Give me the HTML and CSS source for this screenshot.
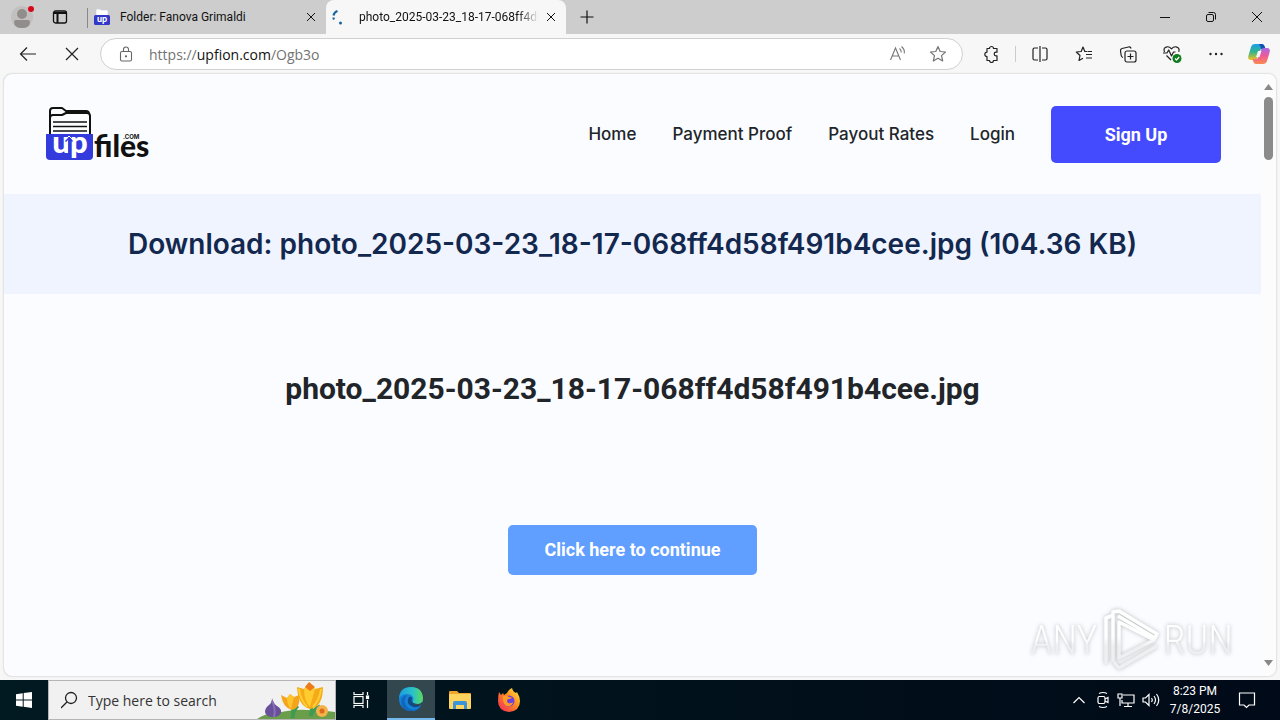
FILE: index.html
```html
<!doctype html>
<html lang="en">
<head>
	<meta charset="utf-8">
	<title>UpFiles - Download</title>
	<link rel="stylesheet" href="styles.css">
</head>

<body>
	<!-- tabs -->
	<header class="tabs">
		<button class="profile" aria-label="Profile">
			<svg width="28" height="28" viewBox="0 0 28 28">
				<circle cx="14" cy="14" r="11" fill="#c2c0bf"/>
				<circle cx="14" cy="11" r="5" fill="#908d8b"/>
				<path d="M6 19q0-2 2-2h12q2 0 2 2 0 6-8 6t-8-6z" fill="#908d8b"/>
				<circle cx="23" cy="6" r="3" fill="#d8081c"/>
			</svg>
		</button>
		<button class="workspace" aria-label="Tab actions">
			<svg width="16" height="16" viewBox="0 0 16 16" fill="none" stroke="#111" stroke-width="1.3">
				<rect x="1.5" y="2" width="13" height="12" rx="2"/>
				<path d="M1.5 4h13M5.5 4v10" stroke-width="2"/>
			</svg>
		</button>
		<div class="tab tab-idle">
			<svg width="16" height="16" viewBox="0 0 16 16">
				<path d="M2 8V1q0-1 1-1h3l1 1h6q1 0 1 1v6z" fill="#fff" stroke="#c8c8d8" stroke-width=".6"/>
				<rect y="6" width="16" height="10" rx="1.5" fill="#3238c8"/>
				<text x="8" y="13" text-anchor="middle" class="fav-text">up</text>
			</svg>
			<span class="tab-name">Folder: Fanova Grimaldi</span>
			<button class="tab-close" aria-label="Close tab">
				<svg width="10" height="10" viewBox="0 0 10 10" stroke="#111"><path d="M1 1l8 8M9 1L1 9"/></svg>
			</button>
		</div>
		<div class="tab tab-active">
			<svg width="16" height="16" viewBox="0 0 16 16" fill="none" stroke="#17659e" stroke-width="2.2">
				<path d="M3 10.500a6 6 0 0 1-.5-2"/>
				<path d="M2.500 6.500a6 6 0 0 1 4-4.500"/>
				<circle cx="9.500" cy="14" r=".7" stroke-width="1.600"/>
			</svg>
			<span class="tab-name">photo_2025-03-23_18-17-068ff4d58f491b4cee.jpg</span>
			<button class="tab-close" aria-label="Close tab">
				<svg width="10" height="10" viewBox="0 0 10 10" stroke="#111"><path d="M1 1l8 8M9 1L1 9"/></svg>
			</button>
		</div>
		<button class="new-tab" aria-label="New tab">
			<svg width="14" height="14" viewBox="0 0 14 14" stroke="#111"><path d="M7 .5v13M.5 7h13" stroke-width="1.200"/></svg>
		</button>
		<div class="window-btns">
			<button aria-label="Minimize">
				<svg width="12" height="12" viewBox="0 0 12 12" stroke="#111"><path d="M1 6.500h10"/></svg>
			</button>
			<button aria-label="Restore">
				<svg width="12" height="12" viewBox="0 0 12 12" fill="none" stroke="#111">
					<rect x="1.500" y="3.500" width="7" height="7" rx="1.500"/>
					<path d="M3.500 1.500h5q2 0 2 2v5"/>
				</svg>
			</button>
			<button aria-label="Close window">
				<svg width="12" height="12" viewBox="0 0 12 12" stroke="#111"><path d="M1 1l10 10M11 1L1 11"/></svg>
			</button>
		</div>
	</header>

	<!-- toolbar -->
	<div class="toolbar">
		<button class="tool" aria-label="Back">
			<svg width="20" height="20" viewBox="0 0 20 20" fill="none" stroke="#222" stroke-width="1.200"><path d="M18 10H2.500M9 3.500L2.500 10 9 16.500"/></svg>
		</button>
		<button class="tool" aria-label="Stop">
			<svg width="20" height="20" viewBox="0 0 20 20" stroke="#222" stroke-width="1.200"><path d="M4 4l12 12M16 4L4 16"/></svg>
		</button>
		<div class="address">
			<svg width="16" height="16" viewBox="0 0 16 16" fill="none" stroke="#666" stroke-width="1.100">
				<rect x="2.500" y="5.500" width="11" height="9.500" rx="1.500"/>
				<path d="M5.500 5.500V3.500a2.500 2.500 0 0 1 5 0v2"/>
				<circle cx="8" cy="10.300" r=".6" fill="#444"/>
			</svg>
			<a class="url" href="#">https://<b>upfion.com</b>/Ogb3o</a>
			<button class="addr-btn" aria-label="Read aloud">
				<svg width="18" height="18" viewBox="0 0 18 18" fill="none" stroke="#777" stroke-width="1.100">
					<path d="M1.500 15L6.500 3l5 12M3.200 11h6.600"/>
					<path d="M10.500 3.500q2 1.500 1.700 4M12.500 1.500q3.600 3 2.700 7"/>
				</svg>
			</button>
			<button class="addr-btn" aria-label="Add to favorites">
				<svg width="18" height="18" viewBox="0 0 18 18" fill="none" stroke="#777" stroke-width="1.200" stroke-linejoin="round">
					<path d="M9 1.500l2.200 5 5.300.5-4 3.600 1.200 5.400L9 13.200 4.300 16l1.200-5.400-4-3.600 5.300-.5z"/>
				</svg>
			</button>
		</div>
		<div class="tools">
			<button class="tool" aria-label="Extensions">
				<svg width="18" height="18" viewBox="0 0 18 18" fill="none" stroke="#222" stroke-width="1.200" stroke-linejoin="round">
					<path d="M5 3.500h2.500a2 2 0 1 1 4 0H15v3.700h-1a1.800 1.800 0 1 0 0 3.600h1v4.700h-3.500a2 2 0 1 1-4 0H5v-4a2.200 2.200 0 1 1 0-4.400z"/>
				</svg>
			</button>
			<span class="sep"></span>
			<button class="tool" aria-label="Split screen">
				<svg width="18" height="18" viewBox="0 0 18 18" fill="none" stroke="#222" stroke-width="1.200">
					<path d="M7 3H3.500Q2 3 2 4.500v9Q2 15 3.500 15H7M11 3h3.500Q16 3 16 4.500v9q0 1.500-1.500 1.500H11M9 1v16"/>
				</svg>
			</button>
			<button class="tool" aria-label="Favorites">
				<svg width="18" height="18" viewBox="0 0 18 18" fill="none" stroke="#222" stroke-width="1.200" stroke-linejoin="round">
					<path d="M12.500 6.500H9.800L8 2 6.200 6.500 1.300 7 5 10.500 4 15.500l4-2.300M11 9.500h6M11 13h6M13 6.500h4"/>
				</svg>
			</button>
			<button class="tool" aria-label="Collections">
				<svg width="18" height="18" viewBox="0 0 18 18" fill="none" stroke="#222" stroke-width="1.200">
					<rect x="6" y="6" width="11" height="11" rx="2"/>
					<path d="M11.500 8.500v6M8.500 11.500h6M4 12.500Q2.500 12 2.200 10.500L1.500 6Q1.200 4 3 3.500L9.500 2q2-.5 2.500 1.500"/>
				</svg>
			</button>
			<button class="tool" aria-label="Browser essentials">
				<svg width="20" height="20" viewBox="0 0 20 20" fill="none" stroke="#222" stroke-width="1.200" stroke-linejoin="round">
					<path d="M2.500 8Q.8 3.500 5 2.800q2.500-.3 4.500 2 2-2.300 4.500-2 4 .7 2.800 5M4.500 11.500l4.500 4.500M1 9h4l1.700-3 2.800 6 2-4h2"/>
					<circle cx="15" cy="14.500" r="4.500" fill="#107c20" stroke="none"/>
					<path d="M13 14.500l1.500 1.500 2.700-3" stroke="#fff"/>
				</svg>
			</button>
			<button class="tool" aria-label="Settings and more">
				<svg width="18" height="18" viewBox="0 0 18 18" fill="#222"><circle cx="3.500" cy="9" r="1.200"/><circle cx="9" cy="9" r="1.200"/><circle cx="14.500" cy="9" r="1.200"/></svg>
			</button>
			<button class="tool" aria-label="Copilot">
				<svg width="24" height="24" viewBox="0 0 24 24">
					<defs>
						<linearGradient id="cpA" x1="0" y1="0" x2="0" y2="1">
							<stop offset="0" stop-color="#1a9fe8"/><stop offset=".5" stop-color="#35b48c"/><stop offset="1" stop-color="#f5c21d"/>
						</linearGradient>
						<linearGradient id="cpB" x1="0" y1="0" x2="0" y2="1">
							<stop offset="0" stop-color="#a868e8"/><stop offset=".5" stop-color="#ef5a96"/><stop offset="1" stop-color="#fb8a4e"/>
						</linearGradient>
					</defs>
					<path d="M8 2h7q2 0 2.700 2.500l.8 2.500h-3q-2.500 0-3.200 2.500l-2 6Q9.500 18 7 18H4q-3.500 0-2.700-4L4 5q1-3 4-3z" fill="url(#cpA)"/>
					<path d="M12 2h3q2 0 2.700 2.500l.8 2.500h-4z" fill="#164fb5"/>
					<path d="M16 22H9q-2 0-2.700-2.500L5.500 17h3q2.500 0 3.200-2.500l2-6Q14.500 6 17 6h3q3.500 0 2.700 4L20 19q-1 3-4 3z" fill="url(#cpB)"/>
					<path d="M11 9h3.500L12.500 15H9z" fill="#f7f7f7"/>
				</svg>
			</button>
		</div>
	</div>

	<!-- site -->
	<div class="view">
		<main class="site">
			<div class="site-head">
				<a class="logo" href="#" aria-label="UpFiles.com">
					<svg width="110" height="58" viewBox="0 0 110 58">
						<g fill="none" stroke="#111" stroke-width="2" stroke-linejoin="round">
							<path d="M6 29V6q0-3 3-3h9l4 3h20q3 0 3 3"/>
							<path d="M6 13q0-3 3-3h9l4-2h21q3 0 3 3v18"/>
							<path d="M9 17h34M9 21.500h34M9 26h34" stroke-width="1.700"/>
						</g>
						<path d="M2 29h47v22q0 4-4 4H6q-4 0-4-4z" fill="#343bdc"/>
						<text x="26" y="48" text-anchor="middle" class="logo-up">up</text>
						<path d="M25 51V34M21.500 36.500L25 33l3.500 3.500" fill="none" stroke="#343bdc" stroke-width="1.500"/>
						<path d="M21.500 34.500L25 31l3.500 3.500" fill="none" stroke="#fff"/>
						<text x="50" y="52" class="logo-files">files</text>
						<text x="79" y="34" class="logo-com">.COM</text>
					</svg>
				</a>
				<nav class="menu">
					<a href="#">Home</a>
					<a href="#">Payment Proof</a>
					<a href="#">Payout Rates</a>
					<a href="#">Login</a>
					<a class="signup" href="#">Sign Up</a>
				</nav>
			</div>
			<div class="banner">
				<h1>Download: photo_2025-03-23_18-17-068ff4d58f491b4cee.jpg (104.36 KB)</h1>
			</div>
			<div class="content">
				<h2>photo_2025-03-23_18-17-068ff4d58f491b4cee.jpg</h2>
				<button class="continue">Click here to continue</button>
			</div>
		</main>
		<div class="scrollbar">
			<svg width="9" height="6" viewBox="0 0 9 6" fill="#888"><path d="M0 6l4.500-6L9 6z"/></svg>
			<div class="thumb"></div>
			<svg width="9" height="6" viewBox="0 0 9 6" fill="#888"><path d="M0 0h9L4.500 6z"/></svg>
		</div>
		<div class="watermark">
			<span>ANY</span>
			<svg width="58" height="64" viewBox="0 0 58 64" fill="none" stroke="url(#wm)" stroke-width="3.500" stroke-linejoin="round">
				<defs>
					<linearGradient id="wm" gradientUnits="userSpaceOnUse" x1="0" y1="0" x2="0" y2="64">
						<stop offset=".45" stop-color="#fff"/><stop offset=".6" stop-color="#ececf0"/>
					</linearGradient>
				</defs>
				<path d="M12 7L4 10v46"/>
				<path d="M11 54V4l6-1 38 23-2 4L16 8"/>
				<path d="M17 14v36l35-18z"/>
				<path d="M12 54l5 6 38-22"/>
			</svg>
			<span>RUN</span>
		</div>
	</div>

	<!-- taskbar -->
	<footer class="taskbar">
		<button class="start" aria-label="Start">
			<svg width="16" height="16" viewBox="0 0 16 16" fill="#fff"><path d="M0 2.300L6.700 1.300V7.500H0zM7.700 1.100L16 0v7.500H7.700zM0 8.500h6.700v6.200L0 13.700zM7.700 8.500H16V16l-8.300-1.200z"/></svg>
		</button>
		<div class="search">
			<svg width="18" height="18" viewBox="0 0 18 18" fill="none" stroke="#222" stroke-width="1.300"><circle cx="10" cy="7" r="5.500"/><path d="M6 11L0 17"/></svg>
			<input type="text" placeholder="Type here to search" aria-label="Type here to search">
			<svg class="flowers" width="78" height="38" viewBox="0 0 78 38">
				<path d="M0 38q8-6 20-6 18-4 30-3 16 0 28 2v7z" fill="#6b9e4b"/>
				<path d="M35 37q2-8-1-15M36 37q0-7 5-12M53 35q3-8 0-17M54 35q2-7 9-10" stroke="#3f9a52" stroke-width="3" fill="none"/>
				<path d="M15 17q1 5 5 8 5 3 4 7-2 4-8 4-7 0-8-5 0-4 4-7 3-2 3-7z" fill="#68509a"/>
				<path d="M15 20q4 7 2 16" stroke="#8a6fb5" stroke-width="2" fill="none"/>
				<path d="M24 14l6 3 3-4 4 3 5-2q2 13-7 15-9-2-11-15z" fill="#f4a51c"/>
				<path d="M30 17l3-4 4 3-3 12q-4-4-4-11z" fill="#ffc52e"/>
				<path d="M40 6l7 2 5-6 6 6 8-2q0 20-13 22-12-3-13-22z" fill="#f5aa18"/>
				<path d="M47 8l5-6 6 6-5 18q-6-6-6-18z" fill="#ffcb2e"/>
				<path d="M48 6l4-5 6 5-5 4z" fill="#ec7b18"/>
				<path d="M42 8q1 10 8 18M64 8q-1 10-8 18" stroke="#ffcf36" stroke-width="2" fill="none"/>
				<circle cx="65" cy="30" r="6" fill="#f5b14a"/><circle cx="65" cy="30" r="2.500" fill="#dc6b20"/>
			</svg>
		</div>
		<button class="task task-view" aria-label="Task view">
			<svg width="18" height="18" viewBox="0 0 18 18" fill="none" stroke="#fff" stroke-width="1.200">
				<rect x="2" y="5.500" width="9" height="7"/>
				<path d="M2 1v2.500h9V1M2 17v-2.500h9V17M15.500 1v3M15.500 9v8"/>
				<rect x="14.500" y="5" width="2" height="2.500" fill="#fff"/>
			</svg>
		</button>
		<button class="task task-on" aria-label="Microsoft Edge">
			<svg width="26" height="26" viewBox="0 0 26 26">
				<defs>
					<linearGradient id="edA" x1="0" y1="0" x2="1" y2="0">
						<stop offset="0" stop-color="#1b9de2"/><stop offset=".6" stop-color="#2bc3c4"/><stop offset="1" stop-color="#5ddb5a"/>
					</linearGradient>
				</defs>
				<circle cx="13" cy="13" r="12" fill="#1581d8"/>
				<path d="M1 12Q2 1 13 1q11 0 12 11 0 6-6 6-5 0-4-3 1-2 0-4-2-3-6-3-5 0-8 4z" fill="url(#edA)"/>
				<path d="M9 9q-5 7 1 13 6 4 12-1-3 5-9 4-9 0-10-9 0-6 6-7z" fill="#1068bd"/>
				<path d="M11 11q-4 7 4 10 5 1 8-2l1-1-4 0q-8 0-6-6-1-2-3-1z" fill="#114b85"/>
				<path d="M14 14q0 4 5 4 4 0 5-2l1 2-2 1q-8 3-9-5z" fill="#33484f"/>
			</svg>
		</button>
		<button class="task" aria-label="File Explorer">
			<svg width="22" height="20" viewBox="0 0 22 20">
				<path d="M0 2q0-1 1-1h7l2 2h11q1 0 1 1v3H0z" fill="#eda52c"/>
				<rect y="4" width="22" height="15" rx="1" fill="#ffd45e"/>
				<path d="M4 19v-6q0-2 2-2h10q2 0 2 2v6h-3v-4H7v4z" fill="#3a95d8"/>
			</svg>
		</button>
		<button class="task" aria-label="Firefox">
			<svg width="24" height="24" viewBox="0 0 24 24">
				<defs>
					<linearGradient id="ffA" x1="1" y1="0" x2="0" y2="1">
						<stop offset="0" stop-color="#fff23e"/><stop offset=".45" stop-color="#ff8a20"/><stop offset="1" stop-color="#f5205f"/>
					</linearGradient>
				</defs>
				<path d="M2 4l2 3 2-2 1 2 3-2q2-4 5-5 1 4 4 5l1-1q3 5 3 9 0 10-11 11Q1 23 1 13q0-5 1-9z" fill="url(#ffA)"/>
				<circle cx="12" cy="13" r="5.500" fill="#7040dc"/>
				<path d="M6 8q4-1 6 1 2 0 3 1-2 1-4 1-2 2 0 4 3 1 5-1-1 5-6 4-5-2-4-10z" fill="#ff9a24"/>
			</svg>
		</button>
		<div class="tray">
			<svg class="chevron" width="12" height="12" viewBox="0 0 12 12" fill="none" stroke="#fff" stroke-width="1.200"><path d="M.5 9L6 3.500 11.500 9"/></svg>
			<svg width="14" height="18" viewBox="0 0 14 18" fill="none" stroke="#fff" stroke-width="1.200"><rect x="2" y="5.500" width="7" height="7" rx="1.500"/><path d="M9 8l3-1.500v5L9 10M3 2.500q4-2 8 0M3 15.500q4 2 8 0"/></svg>
			<svg width="18" height="16" viewBox="0 0 18 16" fill="none" stroke="#fff" stroke-width="1.200"><path d="M6 3h11v8H5V8M11 11v3M7 14.500h8"/><path d="M1 2h4v4H1zM3 6v8"/></svg>
			<svg width="18" height="16" viewBox="0 0 18 16" fill="none" stroke="#fff" stroke-width="1.200"><path d="M1 6h2.500L7 2.500v11L3.500 10H1zM9.500 6q1.500 2 0 4M12 4q3 4 0 8M14.500 2q4.500 6 0 12"/></svg>
		</div>
		<div class="clock">
			<span>8:23 PM</span>
			<span>7/8/2025</span>
		</div>
		<button class="notify" aria-label="Notifications">
			<svg width="18" height="18" viewBox="0 0 18 18" fill="none" stroke="#fff" stroke-width="1.200"><path d="M1.500 2h15v12H11l-2.500 2.500L6 14H1.500z"/></svg>
		</button>
	</footer>
</body>
</html>
```
FILE: styles.css
```css
* {
	box-sizing: border-box;
}
body {
	display: flex;
	flex-direction: column;
	margin: 0;
	height: 100vh;
	overflow: hidden;
	background-color: #f7f7f7;
	font-family: "Open Sans", "Noto Sans", sans-serif;
	font-size: 12px;
	color: #111;
}
button {
	display: flex;
	align-items: center;
	justify-content: center;
	padding: 0;
	border: 0;
	background: none;
	font-family: inherit;
}
a {
	color: inherit;
	text-decoration: none;
}
svg {
	flex: none;
}

/* tabs */
.tabs {
	display: flex;
	height: 34px;
	flex: none;
	background-color: #cdcdcd;
}
.profile {
	width: 28px;
	margin-left: 8px;
}
.workspace {
	width: 48px;
}
.tab {
	display: flex;
	align-items: center;
	padding: 0 7px;
}
.tab-idle {
	position: relative;
	width: 242px;
	gap: 10px;
	padding-left: 10px;
}
.tab-idle::before {
	content: "";
	position: absolute;
	left: 3px;
	top: 8px;
	width: 1px;
	height: 20px;
	background-color: #888;
}
.tab-active {
	width: 240px;
	gap: 4px;
	padding-left: 5px;
	border-radius: 8px 8px 0 0;
	background-color: #f7f7f7;
}
.tab-name {
	flex: 1;
	overflow: hidden;
	white-space: nowrap;
	font-family: Roboto, sans-serif;
}
.tab-active .tab-name {
	margin-left: 8px;
	-webkit-mask-image: linear-gradient(to right, #000 88%, transparent);
	mask-image: linear-gradient(to right, #000 88%, transparent);
}
.tab-close {
	width: 16px;
	height: 16px;
}
.new-tab {
	width: 42px;
}
.window-btns {
	display: flex;
	margin-left: auto;
}
.window-btns button {
	width: 46px;
}
.fav-text {
	font: 900 9px Lato, sans-serif;
	fill: #fff;
}

/* toolbar */
.toolbar {
	display: flex;
	align-items: center;
	flex: none;
	height: 40px;
	padding-left: 6px;
}
.tool {
	width: 44px;
	height: 32px;
}
.address {
	display: flex;
	align-items: center;
	flex: 1;
	height: 32px;
	margin-left: 6px;
	padding: 0 4px 0 17px;
	border: 1px solid #d0d0d0;
	border-radius: 16px;
	background-color: #fff;
}
.url {
	flex: 1;
	margin-left: 15px;
	font-size: 14px;
	color: #737373;
}
.url b {
	font-weight: 400;
	color: #111;
}
.addr-btn {
	width: 40px;
	height: 28px;
}
.tools {
	display: flex;
	align-items: center;
	margin-left: 6px;
}
.sep {
	width: 1px;
	height: 16px;
	margin: 0 2px;
	background-color: #ccc;
}
.tools .tool:last-child {
	width: 42px;
}

/* site */
.view {
	position: relative;
	display: flex;
	flex: 1;
	min-height: 0;
	margin: 0 4px 4px;
	border-radius: 8px;
	background-color: #fafcff;
	box-shadow: 0 0 2px #aaa;
	overflow: hidden;
}
.site {
	flex: 1;
}
.site-head {
	display: flex;
	align-items: center;
	justify-content: space-between;
	height: 120px;
	padding: 0 40px;
}
.logo svg {
	display: block;
}
.logo-up {
	font: 900 31px Lato, sans-serif;
	fill: #fff;
}
.logo-files {
	font: 900 30px Lato, sans-serif;
	fill: #111;
}
.logo-com {
	font: bold 6px Inter, sans-serif;
	fill: #111;
}
.menu {
	display: flex;
	align-items: center;
	gap: 36px;
	font: 500 17px Inter, sans-serif;
	color: #212529;
}
.menu .signup {
	width: 170px;
	border-radius: 5px;
	background-color: #444bff;
	font: bold 18px/57px Roboto, sans-serif;
	text-align: center;
	color: #fff;
}
.banner {
	padding: 30px;
	background-color: #f0f4fe;
}
.banner h1 {
	margin: 0;
	font: 600 28px/40px Inter, sans-serif;
	text-align: center;
	white-space: nowrap;
	color: #13284f;
}
.content {
	display: flex;
	flex-direction: column;
	align-items: center;
	padding-top: 76px;
}
.content h2 {
	margin: 0 0 117px;
	font: bold 30px/38px Roboto, sans-serif;
	color: #212529;
}
.continue {
	width: 249px;
	height: 50px;
	padding-bottom: 2px;
	border-radius: 5px;
	background-color: #609eff;
	font: bold 18px Roboto, sans-serif;
	color: #fff;
}
.scrollbar {
	display: flex;
	flex-direction: column;
	align-items: center;
	width: 15px;
	padding: 10px 0;
	background-color: #fcfcfc;
}
.thumb {
	width: 9px;
	height: 63px;
	margin: 7px 0 auto;
	border-radius: 5px;
	background-color: #8b8b8b;
}
.watermark {
	position: absolute;
	right: 43px;
	bottom: 4px;
	display: flex;
	align-items: center;
	gap: 4px;
	font: 300 40px "Liberation Sans Narrow", "Roboto Condensed", Roboto, sans-serif;
	filter: drop-shadow(0 0 2px #aaa);
	opacity: .8;
}
.watermark span {
	background: linear-gradient(#fff 50%, #ececf0 60%);
	-webkit-background-clip: text;
	background-clip: text;
	color: transparent;
}

/* taskbar */
.taskbar {
	display: flex;
	flex: none;
	height: 40px;
	background: linear-gradient(to right, #011920, #010a18);
	color: #fff;
}
.start {
	width: 48px;
}
.search {
	display: flex;
	align-items: center;
	width: 288px;
	padding-left: 12px;
	border: 1px solid #b5b5b5;
	background-color: #f1f1f1;
}
.search input {
	flex: 1;
	min-width: 0;
	padding: 0 0 0 9px;
	border: 0;
	background: none;
	font: 14px "Open Sans", sans-serif;
}
.search input::placeholder {
	color: #333;
}
.flowers {
	align-self: flex-end;
}
.task {
	width: 48px;
	margin-right: 1px;
}
.task-view {
	width: 50px;
}
.task-on {
	border-bottom: 2px solid #76b9ed;
	background-color: #33474f;
}
.tray {
	display: flex;
	align-items: center;
	gap: 7px;
	margin-left: auto;
}
.chevron {
	margin-right: 4px;
}
.clock {
	display: flex;
	flex-direction: column;
	align-items: center;
	justify-content: center;
	width: 70px;
	font: 12px/18px Roboto, sans-serif;
}
.notify {
	width: 46px;
	margin-right: 4px;
	padding-right: 12px;
}
```
